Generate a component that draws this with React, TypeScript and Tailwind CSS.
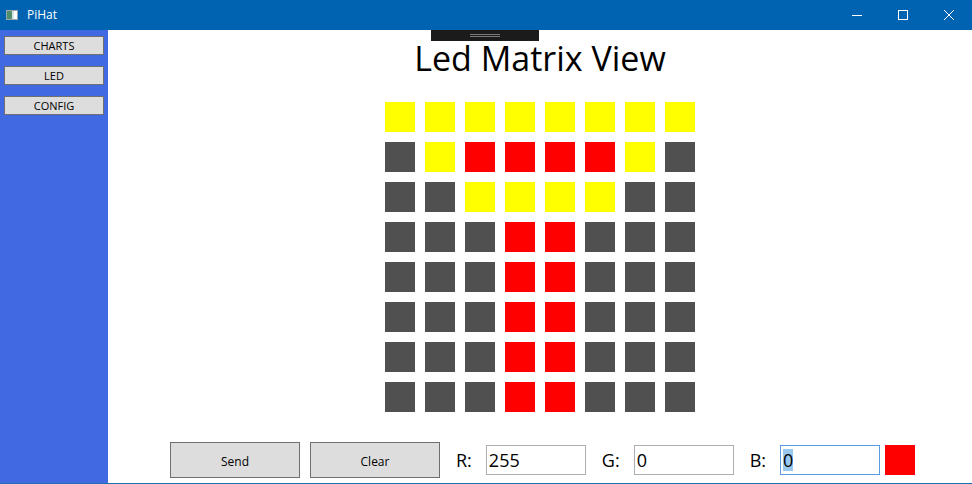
import React from "react";

type Cell = "Y" | "R" | "G";

const rows: string[] = [
  "YYYYYYYY",
  "GYRRRRYG",
  "GGYYYYGG",
  "GGGRRGGG",
  "GGGRRGGG",
  "GGGRRGGG",
  "GGGRRGGG",
  "GGGRRGGG",
];

const cellColor: Record<Cell, string> = {
  Y: "bg-[#ffff00]",
  R: "bg-[#ff0000]",
  G: "bg-[#505050]",
};

function TitleBar() {
  return (
    <div className="h-[30px] bg-[#0063b1] flex items-center text-white">
      {/* app icon */}
      <svg width="12" height="10" viewBox="0 0 12 10" className="ml-[6px]">
        <rect x="0.5" y="0.5" width="11" height="9" fill="#ffffff" stroke="#9aa6ad" />
        <rect x="1" y="1" width="5" height="8" fill="#4f8f6a" />
        <rect x="6" y="1" width="2" height="8" fill="#d8e4ea" />
      </svg>
      <span className="ml-[9px] text-[12px] font-['Open_Sans',sans-serif]">PiHat</span>
      <div className="ml-auto flex h-full">
        <div className="w-[46px] flex items-center justify-center">
          <svg width="10" height="10" viewBox="0 0 10 10">
            <line x1="0" y1="5.5" x2="10" y2="5.5" stroke="white" strokeWidth="1" />
          </svg>
        </div>
        <div className="w-[46px] flex items-center justify-center">
          <svg width="10" height="10" viewBox="0 0 10 10">
            <rect x="0.5" y="0.5" width="9" height="9" fill="none" stroke="white" strokeWidth="1" />
          </svg>
        </div>
        <div className="w-[46px] flex items-center justify-center">
          <svg width="10" height="10" viewBox="0 0 10 10">
            <path d="M0 0 L10 10 M10 0 L0 10" stroke="white" strokeWidth="1" />
          </svg>
        </div>
      </div>
    </div>
  );
}

function NavButton({ label }: { label: string }) {
  return (
    <button className="w-[100px] h-[19px] bg-[#dddddd] border border-[#707070] text-[11px] leading-none text-black font-['Open_Sans',sans-serif]">
      {label}
    </button>
  );
}

function ColorField({ label, value, focused }: { label: string; value: string; focused?: boolean }) {
  return (
    <div className="flex items-center">
      <span className="text-[18px] text-black">{label}</span>
      <div
        className={
          focused
            ? "ml-[14px] w-[100px] h-[30px] border border-[#569de5] bg-white flex items-center pl-[2px]"
            : "ml-[14px] w-[100px] h-[30px] border border-[#abadb3] bg-white flex items-center pl-[2px]"
        }
      >
        <span className={focused ? "text-[18px] leading-[22px] bg-[#99c9ef] text-black" : "text-[18px] leading-[22px] text-black"}>
          {value}
        </span>
      </div>
    </div>
  );
}

export default function App() {
  return (
    <div className="w-[972px] h-[484px] bg-white overflow-hidden font-['Open_Sans',sans-serif]">
      <TitleBar />
      <div className="flex h-[453px]">
        {/* Sidebar */}
        <div className="w-[108px] bg-[#4169e1] flex flex-col items-center pt-[6px] gap-[11px]">
          <NavButton label="CHARTS" />
          <NavButton label="LED" />
          <NavButton label="CONFIG" />
        </div>

        {/* Main */}
        <div className="flex-1 relative flex flex-col items-center">
          {/* collapsed debug toolbar */}
          <div className="absolute top-0 left-[323px] w-[108px] h-[11px] bg-[#1b1b1b] flex flex-col items-center pt-[4px] gap-[1px]">
            <div className="w-[30px] h-px bg-[#7a7a7a]" />
            <div className="w-[30px] h-px bg-[#7a7a7a]" />
          </div>

          <h1 className="mt-[4px] text-[34px] leading-[48px] text-black">Led Matrix View</h1>

          <div className="mt-[20px] grid grid-cols-8 gap-[10px]">
            {rows.map((row, r) =>
              row.split("").map((c, i) => (
                <div key={`${r}-${i}`} className={`w-[30px] h-[30px] ${cellColor[c as Cell]}`} />
              )),
            )}
          </div>

          <div className="mt-auto mb-[5px] w-full flex items-center pl-[62px] h-[36px]">
            <button className="w-[130px] h-[36px] bg-[#dddddd] border border-[#707070] text-[12px] text-black pt-[3px]">Send</button>
            <button className="ml-[10px] w-[130px] h-[36px] bg-[#dddddd] border border-[#707070] text-[12px] text-black pt-[3px]">Clear</button>
            <div className="ml-[16px]">
              <ColorField label="R:" value="255" />
            </div>
            <div className="ml-[16px]">
              <ColorField label="G:" value="0" />
            </div>
            <div className="ml-[16px]">
              <ColorField label="B:" value="0" focused />
            </div>
            <div className="ml-[5px] w-[30px] h-[30px] bg-[#ff0000]" />
          </div>
        </div>
      </div>
      <div className="h-px bg-[#1f6fb2]" />
    </div>
  );
}
